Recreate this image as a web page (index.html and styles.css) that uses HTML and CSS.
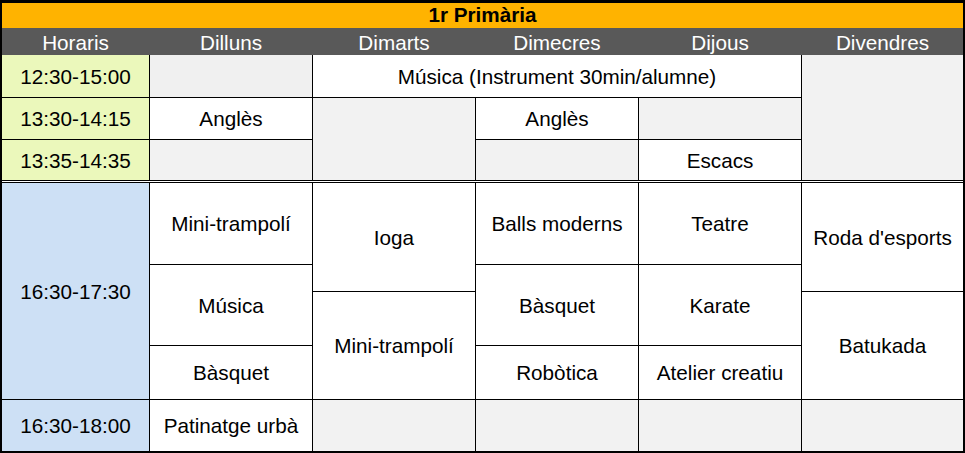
FILE: index.html
```html
<!DOCTYPE html>
<html lang="ca">
<head>
<meta charset="utf-8">
<title>1r Primària</title>
<link rel="stylesheet" href="styles.css">
</head>
<body>
<div class="sheet">
  <div class="title">1r Primària</div>
  <div class="head">
    <div>Horaris</div><div>Dilluns</div><div>Dimarts</div><div>Dimecres</div><div>Dijous</div><div>Divendres</div>
  </div>
  <div class="grid">
    <div class="cell green c1 r1">12:30-15:00</div>
    <div class="cell gray c2 r1 first"></div>
    <div class="cell c3-5 r1">Música (Instrument 30min/alumne)</div>
    <div class="cell gray c6 r1-3"></div>

    <div class="cell green c1 r2">13:30-14:15</div>
    <div class="cell c2 r2">Anglès</div>
    <div class="cell gray c3 r2-3"></div>
    <div class="cell c4 r2">Anglès</div>
    <div class="cell gray c5 r2"></div>

    <div class="cell green c1 r3">13:35-14:35</div>
    <div class="cell gray c2 r3"></div>
    <div class="cell gray c4 r3"></div>
    <div class="cell c5 r3">Escacs</div>

    <div class="spacer"></div>

    <div class="cell blue c1 ra-d">16:30-17:30</div>
    <div class="cell c2 ra">Mini-trampolí</div>
    <div class="cell c2 rb-c">Música</div>
    <div class="cell c2 rd">Bàsquet</div>

    <div class="cell c3 ra-b">Ioga</div>
    <div class="cell c3 rc-d">Mini-trampolí</div>

    <div class="cell c4 ra">Balls moderns</div>
    <div class="cell c4 rb-c">Bàsquet</div>
    <div class="cell c4 rd">Robòtica</div>

    <div class="cell c5 ra">Teatre</div>
    <div class="cell c5 rb-c">Karate</div>
    <div class="cell c5 rd">Atelier creatiu</div>

    <div class="cell c6 ra-b">Roda d'esports</div>
    <div class="cell c6 rc-d">Batukada</div>

    <div class="cell blue c1 rl">16:30-18:00</div>
    <div class="cell c2 rl">Patinatge urbà</div>
    <div class="cell gray c3 rl"></div>
    <div class="cell gray c4 rl"></div>
    <div class="cell gray c5 rl"></div>
    <div class="cell gray c6 rl"></div>
  </div>
</div>
</body>
</html>
```

FILE: styles.css
```css
html, body {
  margin: 0;
  padding: 0;
  background: #ffffff;
}

.sheet {
  width: 961px;
  height: 448px;
  border-style: solid;
  border-color: #000000;
  border-width: 3px 2px 2px 2px;
  font-family: "Liberation Sans", Arial, sans-serif;
  font-size: 20.7px;
  color: #000000;
  display: flex;
  flex-direction: column;
}

.title {
  height: 25px;
  background: #ffb300;
  font-weight: bold;
  display: flex;
  align-items: center;
  justify-content: center;
  padding-bottom: 1px;
  box-sizing: border-box;
}

.head {
  height: 27px;
  background: #595959;
  color: #ffffff;
  display: grid;
  grid-template-columns: 147px 162px 162px 162px 162px 161px;
  column-gap: 1px;
}

.head > div {
  display: flex;
  align-items: center;
  justify-content: center;
  padding-top: 2px;
}

.grid {
  display: grid;
  grid-template-columns: 147px 162px 162px 162px 162px 161px;
  grid-template-rows: 42px 41px 40px 1px 81px 26px 53px 53px 51px;
  gap: 1px;
  background: #000000;
  height: 396px;
}

.cell {
  background: #ffffff;
  display: flex;
  align-items: center;
  justify-content: center;
  white-space: nowrap;
  padding-top: 1px;
}

.green { background: #ebf8bb; }
.blue { background: #cde0f5; }
.gray { background: #f2f2f2; }
.gray.first { background: #f0f0f0; }

.spacer {
  grid-column: 1 / -1;
  grid-row: 4;
  background: #ffffff;
}

.c1 { grid-column: 1; }
.c2 { grid-column: 2; }
.c3 { grid-column: 3; }
.c4 { grid-column: 4; }
.c5 { grid-column: 5; }
.c6 { grid-column: 6; }
.c3-5 { grid-column: 3 / 6; }

.r1 { grid-row: 1; }
.r2 { grid-row: 2; }
.r3 { grid-row: 3; }
.r1-3 { grid-row: 1 / 4; }
.r2-3 { grid-row: 2 / 4; }

.ra { grid-row: 5; }
.rb-c { grid-row: 6 / 8; }
.rd { grid-row: 8; }
.ra-b { grid-row: 5 / 7; }
.rc-d { grid-row: 7 / 9; }
.ra-d { grid-row: 5 / 9; }
.rl { grid-row: 9; }
```
